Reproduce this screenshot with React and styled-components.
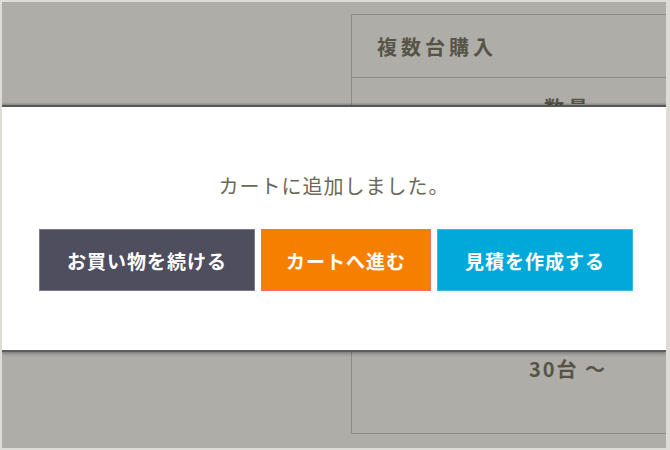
import React from "react";
import styled, { createGlobalStyle } from "styled-components";

const GlobalStyle = createGlobalStyle`
  html, body {
    margin: 0;
    padding: 0;
    overflow: hidden;
  }
  body {
    font-family: "Noto Sans CJK JP", "Noto Sans", sans-serif;
  }
`;

const Frame = styled.div`
  position: relative;
  width: 670px;
  height: 450px;
  box-sizing: border-box;
  border-style: solid;
  border-color: #dddcd7;
  border-width: 2px 4px 2px 2px;
  background: #aeada8;
  overflow: hidden;
`;

const Page = styled.div`
  padding: 12px 0 0 349px;
`;

const Table = styled.div`
  width: 432px;
  border: 1px solid #8c8b86;
  display: flex;
  flex-direction: column;
  color: #575447;
`;

const HeadCell = styled.div`
  height: 62px;
  display: flex;
  align-items: center;
  padding-left: 25px;
  font-size: 20px;
  font-weight: 700;
  letter-spacing: 4px;
  border-bottom: 1px solid #8c8b86;
`;

const BodyCell = styled.div`
  height: 355px;
  display: flex;
  flex-direction: column;
  justify-content: space-between;
  align-items: center;
  padding: 20px 0 54px;
  box-sizing: border-box;
  font-size: 20px;
  font-weight: 700;
  line-height: 1;
`;

const Label = styled.div`
  letter-spacing: ${(p) => p.$spacing || 0}px;
`;

const Modal = styled.div`
  position: absolute;
  left: 0;
  right: 0;
  top: 103px;
  height: 247px;
  box-sizing: border-box;
  background: #fff;
  border-top: 2px solid #575755;
  border-bottom: 2px solid #5e5e5b;
  box-shadow: 0 -1px 2px rgba(0, 0, 0, 0.25), 0 2px 3px rgba(0, 0, 0, 0.25);
  display: flex;
  flex-direction: column;
  align-items: center;
  padding-top: 69px;
`;

const Message = styled.p`
  margin: 0 0 33px;
  font-size: 20px;
  line-height: 20px;
  letter-spacing: 1px;
  color: #6c6857;
`;

const Buttons = styled.div`
  display: flex;
  gap: 6px;
  margin-left: 4px;
`;

const Button = styled.button`
  width: ${(p) => p.$width}px;
  height: 62px;
  box-sizing: border-box;
  border: 1px solid ${(p) => p.$border};
  background: ${(p) => p.$bg};
  color: #fff;
  font-family: inherit;
  font-size: 19px;
  font-weight: 700;
  letter-spacing: 1px;
  padding: 0;
  cursor: pointer;
`;

export default function App() {
  return (
    <>
      <GlobalStyle />
      <Frame>
        <Page>
          <Table>
            <HeadCell>複数台購入</HeadCell>
            <BodyCell>
              <Label $spacing={4}>数量</Label>
              <Label $spacing={2}>30台 〜</Label>
            </BodyCell>
          </Table>
        </Page>
        <Modal>
          <Message>カートに追加しました。</Message>
          <Buttons>
            <Button $width={216} $bg="#4f4e5f" $border="#7d7c8c">
              お買い物を続ける
            </Button>
            <Button $width={170} $bg="#f67f00" $border="#ef6f6a">
              カートへ進む
            </Button>
            <Button $width={196} $bg="#00a9d9" $border="#38bbe2">
              見積を作成する
            </Button>
          </Buttons>
        </Modal>
      </Frame>
    </>
  );
}
